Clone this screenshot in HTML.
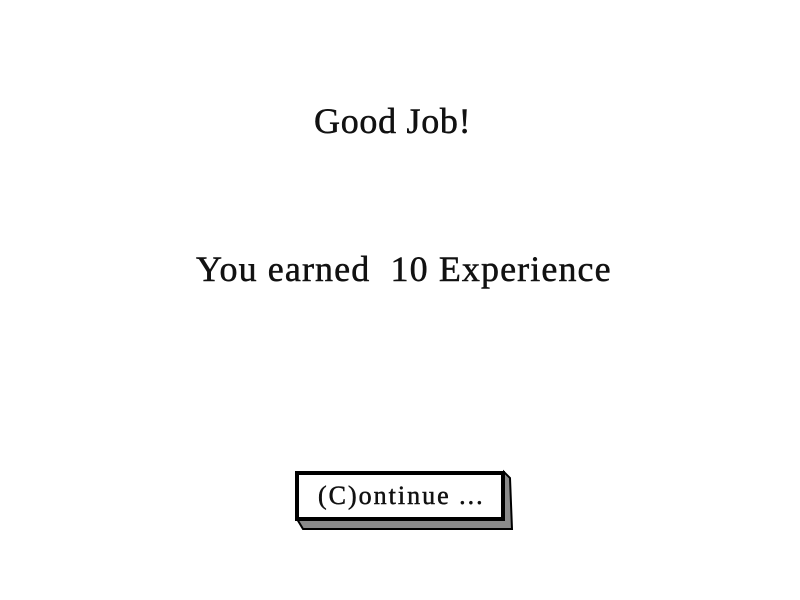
<!DOCTYPE html>
<html><head><style>
html,body{margin:0;padding:0;background:#fff;width:800px;height:600px;overflow:hidden;position:relative;font-family:"Liberation Serif",serif;color:#111}
.t{position:absolute;white-space:nowrap;line-height:1;-webkit-text-stroke:0.5px #111}
</style></head><body>
<div class="t" style="left:314px;top:103px;font-size:36px;letter-spacing:0.7px;">Good Job!</div>
<div class="t" style="left:196px;top:251px;font-size:36px;letter-spacing:1.1px;">You earned&nbsp; 10 Experience</div>
<svg style="position:absolute;left:0;top:0" width="800" height="600">
  <polygon points="297,519 504,519 504,472 510,478 512,529 303,529" fill="#8a8a8a" stroke="#000" stroke-width="2"/>
  <rect x="297" y="473" width="206" height="46" fill="#fff" stroke="#000" stroke-width="4"/>
</svg>
<div class="t" style="left:318px;top:483px;font-size:26px;letter-spacing:2px;">(C)ontinue ...</div>
</body></html>
